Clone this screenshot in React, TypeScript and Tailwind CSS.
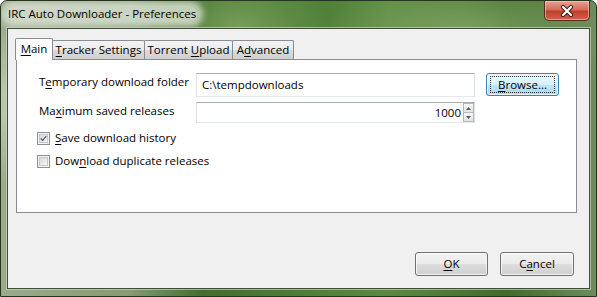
import React from "react";

const U = ({ children }: { children: React.ReactNode }) => (
  <span className="underline underline-offset-[2px] decoration-[1px]">{children}</span>
);

const Tab = ({
  w,
  active,
  children,
}: {
  w: string;
  active?: boolean;
  children: React.ReactNode;
}) =>
  active ? (
    <div
      className={`${w} relative z-10 -mb-px flex h-[22px] items-start justify-center rounded-t-[2px] border border-b-0 border-[#898c95] bg-white pt-[2px]`}
    >
      {children}
    </div>
  ) : (
    <div
      className={`${w} -ml-px flex h-[19px] items-start justify-center rounded-t-[2px] border border-b-0 border-[#898c95] bg-[linear-gradient(#f3f3f3,#ebebeb_50%,#dcdcdc_50%,#cfcfcf)] pt-[1px]`}
    >
      {children}
    </div>
  );

const Button = ({
  children,
  focused,
  className,
}: {
  children: React.ReactNode;
  focused?: boolean;
  className: string;
}) => (
  <div
    className={`${className} flex items-center justify-center rounded-[3px] border ${
      focused
        ? "border-[#3c7fb1] bg-[linear-gradient(#eaf6fd,#d9f0fc_50%,#bee6fd_50%,#a7d9f5)]"
        : "border-[#707070] bg-[linear-gradient(#f2f2f2,#ebebeb_50%,#dddddd_50%,#cfcfcf)]"
    } shadow-[inset_0_0_0_1px_rgba(255,255,255,0.7)]`}
  >
    {focused ? (
      <div className="flex h-[17px] w-[65px] items-center justify-center border border-dotted border-[#333]">
        {children}
      </div>
    ) : (
      children
    )}
  </div>
);

const Checkbox = ({ checked }: { checked?: boolean }) => (
  <div className="flex h-[13px] w-[13px] shrink-0 items-center justify-center border border-[#8e8f8f] bg-[#f4f4f4]">
    <div className="flex h-[9px] w-[9px] items-center justify-center border border-[#c6c8cc] bg-[linear-gradient(135deg,#d6d8dc,#f6f6f6)]">
      {checked ? (
        <svg width="9" height="9" viewBox="0 0 9 9">
          <path d="M1 4.5 L3.5 7 L8 1.5" stroke="#4b5563" strokeWidth="1.6" fill="none" />
        </svg>
      ) : null}
    </div>
  </div>
);

export default function App() {
  return (
    <div
      className="flex h-[297px] w-[597px] flex-col overflow-hidden rounded-t-[7px] border border-[#26331f] bg-[radial-gradient(ellipse_at_8%_35%,#c4cdbb,transparent_30%),radial-gradient(ellipse_at_78%_15%,#86a96a,transparent_22%),radial-gradient(ellipse_at_52%_50%,#9fb48d,transparent_14%),radial-gradient(ellipse_at_40%_10%,#78a05a,transparent_18%),linear-gradient(90deg,#9aab8d,#839a72_22%,#416f2c_34%,#4d7e35_50%,#5a8a40_65%,#3f6d29_85%,#6f8c5b)] text-[11.5px] leading-[16px] text-black"
      style={{ fontFamily: '"Open Sans", "Noto Sans", sans-serif' }}
    >
      <div className="flex h-[27px] shrink-0 items-start justify-between pl-[5px] pr-[6px]">
        <span className="mt-[5px] rounded-full bg-[rgba(220,226,214,0.8)] px-[2px] text-[11.5px] leading-[16px] shadow-[0_0_6px_5px_rgba(220,226,214,0.8)]">
          IRC Auto Downloader - Preferences
        </span>
        <div className="flex h-[20px] w-[46px] items-center justify-center rounded-b-[5px] border border-t-0 border-[#5b2a22] bg-[linear-gradient(#e8a393,#d56d5a_45%,#c0402c_55%,#d0624a)] shadow-[inset_0_0_0_1px_rgba(255,220,210,0.5)]">
          <svg width="14" height="12" viewBox="0 0 14 12">
            <path
              d="M3 2 L11 10 M11 2 L3 10"
              stroke="#3b1a14"
              strokeWidth="4"
              strokeLinecap="round"
            />
            <path
              d="M3 2 L11 10 M11 2 L3 10"
              stroke="#ffffff"
              strokeWidth="2.2"
              strokeLinecap="round"
            />
          </svg>
        </div>
      </div>

      <div className="mx-[6px] mb-[7px] flex flex-1 flex-col border border-[#3f4f37] bg-[#f0f0f0] shadow-[0_0_0_1px_rgba(200,212,190,0.7)]">
        <div className="flex items-end pl-[7px] pt-[9px]">
          <Tab w="w-[38px]" active>
            <span>
              <U>M</U>ain
            </span>
          </Tab>
          <Tab w="w-[93px]">
            <span>
              <U>T</U>racker Settings
            </span>
          </Tab>
          <Tab w="w-[89px]">
            <span>
              Torrent <U>U</U>pload
            </span>
          </Tab>
          <Tab w="w-[62px]">
            <span>
              A<U>d</U>vanced
            </span>
          </Tab>
        </div>

        <div className="ml-[8px] h-[154px] w-[561px] border border-[#898c95] bg-white pl-[20px] pt-[13px]">
          <div className="flex items-start">
            <div className="w-[159px] pl-[2px] pt-[1px]">
              T<U>e</U>mporary download folder
            </div>
            <div className="flex h-[24px] w-[279px] items-center border border-[#abadb3] border-b-[#e3e9ef] border-l-[#e2e3ea] border-r-[#dbdfe6] pl-[5px]">
              C:\tempdownloads
            </div>
            <Button focused className="ml-[11px] h-[23px] w-[73px]">
              <span>
                <U>B</U>rowse...
              </span>
            </Button>
          </div>

          <div className="mt-[5px] flex items-start">
            <div className="w-[159px] pl-[2px] pt-[1px]">
              Ma<U>x</U>imum saved releases
            </div>
            <div className="flex h-[21px] w-[279px] items-center border border-[#abadb3] border-b-[#e3e9ef] border-l-[#e2e3ea] border-r-[#dbdfe6]">
              <div className="flex-1 pr-[2px] text-right">1000</div>
              <div className="flex h-full w-[11px] flex-col">
                <div className="flex flex-1 items-center justify-center border border-[#b4b8bf] bg-[linear-gradient(#f6f6f6,#e2e2e2)]">
                  <svg width="5" height="3" viewBox="0 0 5 3">
                    <path d="M0 3 L2.5 0 L5 3 Z" fill="#555" />
                  </svg>
                </div>
                <div className="flex flex-1 items-center justify-center border border-t-0 border-[#b4b8bf] bg-[linear-gradient(#f6f6f6,#e2e2e2)]">
                  <svg width="5" height="3" viewBox="0 0 5 3">
                    <path d="M0 0 L2.5 3 L5 0 Z" fill="#555" />
                  </svg>
                </div>
              </div>
            </div>
          </div>

          <div className="mt-[7px] flex h-[16px] items-center gap-[5px]">
            <Checkbox checked />
            <span>
              <U>S</U>ave download history
            </span>
          </div>
          <div className="mt-[7px] flex h-[16px] items-center gap-[5px]">
            <Checkbox />
            <span>
              Dow<U>n</U>load duplicate releases
            </span>
          </div>
        </div>

        <div className="mt-auto flex justify-end gap-[12px] pb-[12px] pr-[15px]">
          <Button className="h-[24px] w-[73px]">
            <span>
              <U>O</U>K
            </span>
          </Button>
          <Button className="h-[24px] w-[74px]">
            <span>
              C<U>a</U>ncel
            </span>
          </Button>
        </div>
      </div>
    </div>
  );
}
